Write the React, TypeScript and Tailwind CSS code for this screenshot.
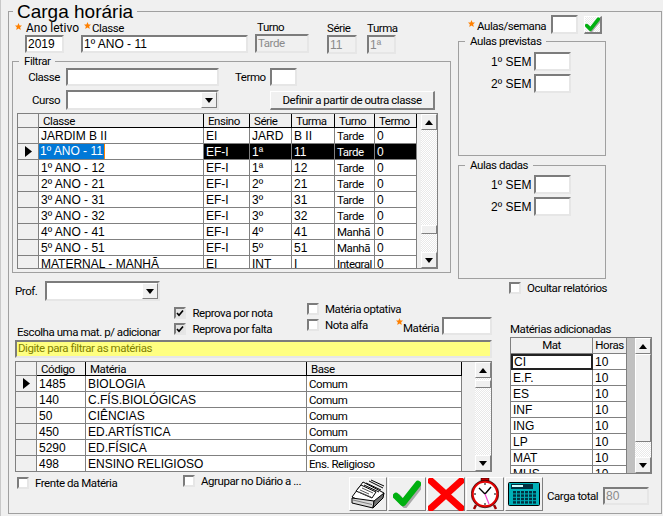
import type { ReactNode } from 'react';

const sunken = 'border-2 border-t-[#7c7c7c] border-l-[#7c7c7c] border-r-[#e6e6e6] border-b-[#e6e6e6]';
const raised = 'border border-t-white border-l-white border-r-[#808080] border-b-[#808080]';
const track = 'bg-[repeating-conic-gradient(#ffffff_0_25%,#e9e9e9_0_50%)] bg-[length:2px_2px]';
// uppercase text and numbers sit at Arial widths, the rest of the form is narrower
const caps = "font-['Liberation_Sans',Arial,sans-serif] text-[12px] tracking-normal";

const CLASS_COLS = 'grid grid-cols-[21px_165px_46px_42px_43px_40px_42px]';
const MAT_COLS = 'grid grid-cols-[21px_49px_221px_155px]';
const ADD_COLS = 'grid grid-cols-[82px_34px]';

const classes = [
  ['JARDIM B II', 'EI', 'JARD', 'B II', 'Tarde', '0'],
  ['1º ANO - 11', 'EF-I', '1ª', '11', 'Tarde', '0'],
  ['1º ANO - 12', 'EF-I', '1ª', '12', 'Tarde', '0'],
  ['2º ANO - 21', 'EF-I', '2º', '21', 'Tarde', '0'],
  ['3º ANO - 31', 'EF-I', '3º', '31', 'Tarde', '0'],
  ['3º ANO - 32', 'EF-I', '3º', '32', 'Tarde', '0'],
  ['4º ANO - 41', 'EF-I', '4º', '41', 'Manhã', '0'],
  ['5º ANO - 51', 'EF-I', '5º', '51', 'Manhã', '0'],
  ['MATERNAL - MANHÃ', 'EI', 'INT', 'I', 'Integral', '0'],
];

const materias = [
  ['1485', 'BIOLOGIA', 'Comum'],
  ['140', 'C.FÍS.BIOLÓGICAS', 'Comum'],
  ['50', 'CIÊNCIAS', 'Comum'],
  ['450', 'ED.ARTÍSTICA', 'Comum'],
  ['5290', 'ED.FÍSICA', 'Comum'],
  ['498', 'ENSINO RELIGIOSO', 'Ens. Religioso'],
];

const adicionadas = ['CI', 'E.F.', 'ES', 'INF', 'ING', 'LP', 'MAT', 'MUS'];

function Star({ className = '' }: { className?: string }) {
  return (
    <svg width="7" height="7" viewBox="0 0 10 10" className={`shrink-0 ${className}`}>
      <polygon points="5,0 6.5,3.4 10,3.6 7.4,6 8.2,10 5,7.9 1.8,10 2.6,6 0,3.6 3.5,3.4" fill="#ff8000" />
    </svg>
  );
}

function Triangle({ up }: { up?: boolean }) {
  return (
    <svg width="8" height="5" viewBox="0 0 8 5">
      <polygon points={up ? '4,0 8,5 0,5' : '0,0 8,0 4,5'} fill="#000" />
    </svg>
  );
}

function Pointer() {
  return (
    <svg width="7" height="11" viewBox="0 0 7 11">
      <polygon points="0,0 7,5.5 0,11" fill="#000" />
    </svg>
  );
}

function Input({ className = '', children, disabled }: { className?: string; children?: ReactNode; disabled?: boolean }) {
  return (
    <div
      className={`${sunken} flex items-center overflow-hidden whitespace-nowrap pl-[1px] leading-none ${
        disabled ? 'bg-[#f0f0f0] text-[#8a8a8a]' : 'bg-white'
      } ${className}`}
    >
      {children}
    </div>
  );
}

function Combo({ className = '' }: { className?: string }) {
  return (
    <div className={`${sunken} flex justify-end bg-white ${className}`}>
      <div className={`${raised} flex w-4 items-center justify-center bg-[#f0f0f0]`}>
        <Triangle />
      </div>
    </div>
  );
}

function Check({ checked, label, className = '' }: { checked?: boolean; label: string; className?: string }) {
  return (
    <div className={`flex h-3 items-center gap-[6px] whitespace-nowrap ${className}`}>
      <div className={`${sunken} flex h-3 w-3 shrink-0 items-center justify-center ${checked ? 'bg-[#e4e4e4]' : 'bg-white'}`}>
        {checked && (
          <svg width="8" height="8" viewBox="0 0 8 8" className="shrink-0">
            <path d="M1 4 L3 6.2 L7 1.5" fill="none" stroke="#000" strokeWidth="1.7" />
          </svg>
        )}
      </div>
      <span>{label}</span>
    </div>
  );
}

function GroupBox({ title, className = '', children }: { title: string; className?: string; children?: ReactNode }) {
  return (
    <div className={`relative border border-[#a0a0a0] ${className}`}>
      <span className="absolute left-[6px] top-[-8px] whitespace-nowrap bg-[#f0f0f0] px-[5px] leading-[14px]">{title}</span>
      {children}
    </div>
  );
}

function ScrollBar({ thumb, thumbSize, className = '' }: { thumb: string; thumbSize: string; className?: string }) {
  return (
    <div className={`flex w-4 shrink-0 flex-col ${className}`}>
      <div className={`${raised} flex h-4 shrink-0 items-center justify-center bg-[#f0f0f0]`}>
        <Triangle up />
      </div>
      <div className={`${thumb} shrink-0 ${track}`} />
      <div className={`${raised} ${thumbSize} shrink-0 bg-[#f0f0f0]`} />
      <div className={`flex-1 ${track}`} />
      <div className={`${raised} flex h-4 shrink-0 items-center justify-center bg-[#f0f0f0]`}>
        <Triangle />
      </div>
    </div>
  );
}

const cell = 'overflow-hidden whitespace-nowrap border-r border-b border-[#808080] pl-[2px] pt-px leading-[14px]';
const headCell = 'overflow-hidden whitespace-nowrap border-r border-b border-black bg-[#f0f0f0] pl-[4px] pt-px leading-[13px]';
const indCell = 'flex items-center justify-center border-r border-b border-[#808080] bg-[#f0f0f0]';

const cellFont = (text: string) => (/[a-z]/.test(text) ? '' : caps);

function ClassGrid() {
  return (
    <div className="ml-[4px] mt-[3px] flex h-[156px] w-[421px] overflow-hidden border border-[#808080] bg-[#f0f0f0]">
      <div className="w-[399px] shrink-0">
        <div className={`${CLASS_COLS} h-[14px]`}>
          <div className="border-r border-b border-[#808080]" />
          {['Classe', 'Ensino', 'Série', 'Turma', 'Turno', 'Termo'].map((h) => (
            <div key={h} className={headCell}>
              {h}
            </div>
          ))}
        </div>
        {classes.map((r, i) => (
          <div key={r[0]} className={`${CLASS_COLS} h-4 bg-white`}>
            <div className={indCell}>{i === 1 && <Pointer />}</div>
            {r.map((c, j) =>
              i === 1 && j === 0 ? (
                <div key={j} className={`overflow-hidden border-r border-b border-[#808080] leading-[15px] ${caps}`}>
                  <span className="inline-block border-r border-[#ff8000] bg-[#0078d7] pl-[1px] pr-[1px] text-white">{c}</span>
                </div>
              ) : (
                <div key={j} className={`${cell} ${cellFont(c)} ${i === 1 ? 'bg-black text-white' : ''}`}>
                  {c}
                </div>
              )
            )}
          </div>
        ))}
      </div>
      <ScrollBar className="ml-auto" thumb="h-[95px]" thumbSize="h-[9px]" />
    </div>
  );
}

function MateriaGrid() {
  return (
    <div className="mt-[3px] flex h-[111px] w-[477px] overflow-hidden border border-[#808080] bg-[#f0f0f0]">
      <div className="w-[446px] shrink-0">
        <div className={`${MAT_COLS} h-[14px]`}>
          <div className="border-r border-b border-[#808080]" />
          {['Código', 'Matéria', 'Base'].map((h) => (
            <div key={h} className={headCell}>
              {h}
            </div>
          ))}
        </div>
        {materias.map((r, i) => (
          <div key={r[0]} className={`${MAT_COLS} h-4 bg-white`}>
            <div className={indCell}>{i === 0 && <Pointer />}</div>
            {r.map((c) => (
              <div key={c} className={`${cell} ${cellFont(c)}`}>
                {c}
              </div>
            ))}
          </div>
        ))}
      </div>
      <ScrollBar className="ml-auto" thumb="h-[2px]" thumbSize="h-[8px]" />
    </div>
  );
}

function AdicionadasGrid() {
  return (
    <div className="mt-px flex h-[137px] w-[142px] overflow-hidden border border-[#808080] bg-[#c0c0c0]">
      <div className="w-[116px] shrink-0">
        <div className={`${ADD_COLS} h-4 bg-[#f0f0f0]`}>
          {['Mat', 'Horas'].map((h) => (
            <div key={h} className="border-r border-b border-[#808080] text-center leading-[15px]">
              {h}
            </div>
          ))}
        </div>
        {adicionadas.map((m, i) => (
          <div key={m} className={`${ADD_COLS} h-4 bg-white ${caps}`}>
            <div className={i === 0 ? 'border-2 border-[#222] pl-[1px] leading-[12px]' : cell}>{m}</div>
            <div className={cell}>10</div>
          </div>
        ))}
      </div>
      <ScrollBar className="ml-auto bg-[#f0f0f0]" thumb="h-0" thumbSize="h-[88px]" />
    </div>
  );
}

function CardFileIcon() {
  return (
    <svg width="34" height="30" viewBox="0 0 34 30">
      <polygon points="1,18 23,28 33,14 12,3" fill="#fff" stroke="#000" />
      <path d="M13,6 L28,13 M15,4 L30,11 M18,2 L32,9 M20,1 L33,7" stroke="#000" fill="none" />
      <polygon points="5,12 21,19 25,13 10,6" fill="#fff" stroke="#000" />
      <path d="M9,11 L18,15 M8,13 L20,18 M11,9 L22,14" stroke="#555" fill="none" />
      <polygon points="1,19 1,24 22,29 23,22" fill="#d8d8d8" stroke="#000" />
      <polygon points="23,22 22,29 32,19 33,14" fill="#707070" stroke="#000" />
      <path d="M2,21 L21,25.5" stroke="#808080" />
    </svg>
  );
}

function CheckIcon({ size = 28 }: { size?: number }) {
  return (
    <svg width={size} height={size} viewBox="0 0 28 28">
      <path d="M5 17 L12 25 L27 6" fill="none" stroke="#a8a8a8" strokeWidth="6" strokeLinecap="round" />
      <path d="M3 16 L10 23 L25 4" fill="none" stroke="#00b010" strokeWidth="6.5" strokeLinecap="round" strokeLinejoin="round" />
    </svg>
  );
}

function CrossIcon() {
  return (
    <svg width="36" height="33" viewBox="0 0 36 33">
      <path d="M3 3 L33 30 M33 3 L3 30" stroke="#ff0000" strokeWidth="7" strokeLinecap="round" />
    </svg>
  );
}

function ClockIcon() {
  return (
    <svg width="28" height="32" viewBox="0 0 28 32">
      <rect x="10" y="0" width="8" height="3" fill="#c00000" stroke="#000" strokeWidth="0.5" />
      <path d="M5 27 L3 31 M23 27 L25 31" stroke="#a00000" strokeWidth="2.5" />
      <circle cx="14" cy="16" r="12.5" fill="#fff" stroke="#e00000" strokeWidth="2.5" />
      <circle cx="14" cy="16" r="13.8" fill="none" stroke="#000" strokeWidth="0.6" />
      <path d="M14 16 L8 10 M14 16 L20 9" stroke="#000" strokeWidth="1.4" />
      <path d="M14 16 L18 26" stroke="#f040d0" strokeWidth="1.2" />
      <path d="M14 5 V7 M14 25 V27 M3 16 H5 M23 16 H25" stroke="#000" strokeWidth="1" />
    </svg>
  );
}

function CalculatorIcon() {
  const keys = [0, 1, 2, 3, 4, 5];
  return (
    <svg width="32" height="24" viewBox="0 0 32 24">
      <rect x="0.5" y="0.5" width="31" height="23" rx="1" fill="#00b0b8" stroke="#000" />
      <rect x="3" y="2" width="22" height="5" fill="#003040" />
      <rect x="4" y="3" width="11" height="2" fill="#d0ffff" />
      {[0, 1, 2, 3].map((row) =>
        keys.map((k) => <rect key={`${row}-${k}`} x={5 + k * 4} y={9 + row * 3.4} width="3" height="2.4" fill="#003040" />)
      )}
    </svg>
  );
}

function ToolButton({ children, className = '' }: { children: ReactNode; className?: string }) {
  return (
    <div className={`${raised} flex h-[34px] items-center justify-center bg-[#f0f0f0] ${className}`}>{children}</div>
  );
}

export default function App() {
  return (
    <div className="h-[516px] w-[663px] overflow-hidden border-l border-[#c8c8c8] bg-[#f0f0f0] pl-[7px] pt-[11px] font-['Roboto',sans-serif] text-[11.5px] leading-[14px] tracking-[-0.45px] text-black">
      <div className="relative h-[503px] w-[654px] border border-[#a0a0a0] pl-[3px]">
        <span className={`absolute left-[4px] top-[-11px] whitespace-nowrap bg-[#f0f0f0] px-[4px] !text-[19px] leading-[21px] ${caps}`}>
          Carga horária
        </span>

        {/* Top: class picker on the left, weekly lessons on the right */}
        <div className="flex h-[288px]">
          <div className="w-[439px] shrink-0">
            <div className="flex h-[41px] items-start pt-[8px]">
              <div className="ml-[3px] w-[66px] shrink-0">
                <div className="flex h-[15px] items-start gap-[4px]">
                  <Star className="mt-[3px]" />
                  <span className="mt-px whitespace-nowrap text-[12px] tracking-normal">Ano letivo</span>
                </div>
                <Input className={`ml-[10px] h-[18px] w-[39px] ${caps}`}>2019</Input>
              </div>
              <div className="w-[174px] shrink-0">
                <div className="flex h-[15px] items-start gap-px pl-[3px]">
                  <Star className="mt-[2px]" />
                  <span className="mt-px">Classe</span>
                </div>
                <Input className={`h-[18px] w-[167px] ${caps}`}>1º ANO - 11</Input>
              </div>
              <div className="w-[72px] shrink-0">
                <div className="h-[14px] pl-[2px]">Turno</div>
                <Input disabled className="h-[19px] w-[54px]">
                  Tarde
                </Input>
              </div>
              <div className="mt-[1px] w-[40px] shrink-0">
                <div className="h-[14px]">Série</div>
                <Input disabled className={`h-[19px] w-[30px] ${caps}`}>
                  11
                </Input>
              </div>
              <div className="mt-[1px] w-[30px] shrink-0">
                <div className="h-[14px]">Turma</div>
                <Input disabled className={`h-[19px] w-[29px] ${caps}`}>
                  1ª
                </Input>
              </div>
            </div>

            <GroupBox title="Filtrar" className="mt-[8px] h-[212px] w-[439px]">
              <div className="flex items-center pt-[6px]">
                <span className="w-[53px] pr-[6px] text-right">Classe</span>
                <Input className="h-[18px] w-[153px]" />
                <span className="ml-[16px] w-[35px]">Termo</span>
                <Input className="h-[18px] w-[27px]" />
              </div>
              <div className="mt-[4px] flex items-center">
                <span className="w-[53px] pr-[6px] text-right">Curso</span>
                <Combo className="h-5 w-[153px]" />
                <div className={`${raised} ml-[51px] flex h-[19px] w-[165px] items-center justify-center border-b-2 border-r-2 bg-[#f0f0f0]`}>
                  Definir a partir de outra classe
                </div>
              </div>
              <ClassGrid />
            </GroupBox>

            <div className="mt-[8px] flex items-center">
              <span className="ml-[3px] w-[30px]">Prof.</span>
              <Combo className="h-5 w-[115px]" />
            </div>
          </div>

          <div className="ml-[7px] w-[148px] shrink-0">
            <div className="flex h-[22px] items-start pl-[10px] pt-[3px]">
              <Star className="mt-[5px]" />
              <span className="ml-[2px] mt-[4px] w-[69px] whitespace-nowrap">Aulas/semana</span>
              <Input className="ml-[5px] h-[19px] w-[27px]" />
              <div className={`${raised} ml-[6px] mt-px flex h-[18px] w-[18px] items-center justify-center border-r-2 border-b-2 ${track}`}>
                <CheckIcon size={15} />
              </div>
            </div>
            <GroupBox title="Aulas previstas" className="mt-[7px] h-[115px] w-[148px]">
              <div className="flex items-center pl-[32px] pt-[10px]">
                <span className={`w-[43px] ${caps}`}>1º SEM</span>
                <Input className="h-[19px] w-[37px]" />
              </div>
              <div className="mt-[3px] flex items-center pl-[32px]">
                <span className={`w-[43px] ${caps}`}>2º SEM</span>
                <Input className="h-[19px] w-[37px]" />
              </div>
            </GroupBox>
            <GroupBox title="Aulas dadas" className="mt-[9px] h-[114px] w-[148px]">
              <div className="flex items-center pl-[32px] pt-[9px]">
                <span className={`w-[43px] ${caps}`}>1º SEM</span>
                <Input className="h-[19px] w-[37px]" />
              </div>
              <div className="mt-[3px] flex items-center pl-[32px]">
                <span className={`w-[43px] ${caps}`}>2º SEM</span>
                <Input className="h-[19px] w-[37px]" />
              </div>
            </GroupBox>
            <Check label="Ocultar relatórios" className="ml-[51px] mt-[3px]" />
          </div>
        </div>

        {/* Subjects */}
        <div className="flex h-[173px] pl-[3px]">
          <div className="w-[477px] shrink-0">
            <div className="flex h-[40px]">
              <span className="ml-[2px] mt-[25px] w-[158px] whitespace-nowrap">Escolha uma mat. p/ adicionar</span>
              <div className="flex w-[133px] flex-col gap-[4px] pt-[7px]">
                <Check checked label="Reprova por nota" />
                <Check checked label="Reprova por falta" />
              </div>
              <div className="flex w-[89px] flex-col gap-[4px] pt-[3px]">
                <Check label="Matéria optativa" />
                <Check label="Nota alfa" />
              </div>
              <div className="mt-[17px] flex h-[18px] items-start">
                <Star className="mt-px" />
                <span className="mt-[4px] w-[39px]">Matéria</span>
                <Input className="h-[18px] w-[50px]" />
              </div>
            </div>
            <Input className="h-[18px] w-[477px] !bg-[#ffff80] text-[#808000]">Digite para filtrar as matérias</Input>
            <MateriaGrid />
          </div>
          <div className="ml-[18px] w-[142px] pt-[22px]">
            <div className="h-[14px] whitespace-nowrap">Matérias adicionadas</div>
            <AdicionadasGrid />
          </div>
        </div>

        {/* Bottom actions */}
        <div className="flex h-[36px] items-start pl-[5px]">
          <Check label="Frente da Matéria" className="mt-[4px] w-[166px]" />
          <Check label="Agrupar no Diário  a ..." className="mt-[2px] w-[166px]" />
          <div className="mt-[4px] flex gap-px">
            <ToolButton className="w-[38px]">
              <CardFileIcon />
            </ToolButton>
            <ToolButton className="w-[38px]">
              <CheckIcon />
            </ToolButton>
            <ToolButton className="w-[38px]">
              <CrossIcon />
            </ToolButton>
            <ToolButton className="w-[38px]">
              <ClockIcon />
            </ToolButton>
            <ToolButton className="w-[38px]">
              <CalculatorIcon />
            </ToolButton>
          </div>
          <span className="ml-[4px] mt-[16px] w-[56px] whitespace-nowrap">Carga total</span>
          <Input disabled className={`mt-[14px] h-[18px] w-[46px] ${caps}`}>
            80
          </Input>
        </div>
      </div>
    </div>
  );
}
